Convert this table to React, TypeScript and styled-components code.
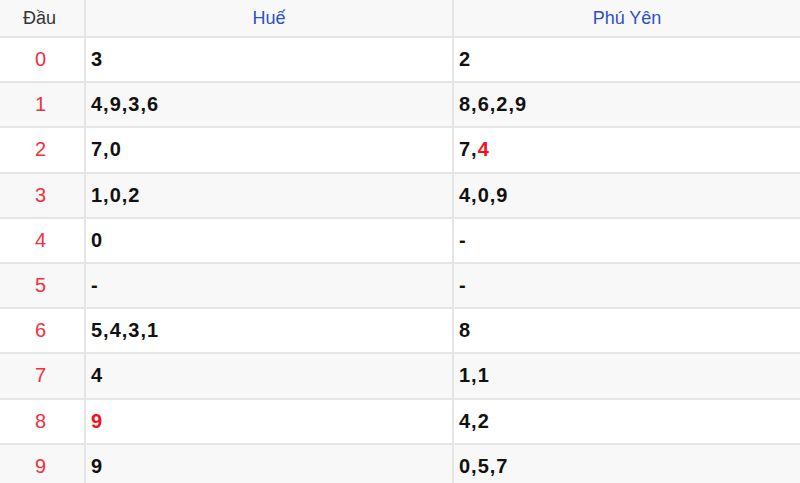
import React from "react";
import styled, { createGlobalStyle } from "styled-components";

const Global = createGlobalStyle`
    body {
        margin: 0;
        background: #fff;
        font-family: "Liberation Sans", Arial, sans-serif;
    }
`

const Table = styled.table`
    width: 800px;
    border-collapse: collapse;
    table-layout: fixed;
`

const HeadCell = styled.th<{ $blue?: boolean }>`
    height: 36px;
    padding: 0;
    background: #f8f8f8;
    border: 2px solid #e5e5e5;
    border-top: none;
    font-weight: normal;
    font-size: 18px;
    text-align: center;
    color: ${({ $blue }) => ($blue ? "#2f4fc4" : "#333")};
    &:first-child { border-left: none; padding-right: 5px; }
    &:last-child { border-right: none; }
`

const Row = styled.tr<{ $odd: boolean }>`
    background: ${({ $odd }) => ($odd ? "#f8f8f8" : "#fff")};
`

const HeadNum = styled.td`
    height: 43.2px;
    padding: 0 3px 0 0;
    border: 2px solid #e5e5e5;
    border-left: none;
    text-align: center;
    color: #f2303c;
    font-size: 20px;
`

const Cell = styled.td`
    height: 43.2px;
    padding: 0 0 0 5px;
    border: 2px solid #e5e5e5;
    font-size: 20px;
    letter-spacing: 1px;
    font-weight: bold;
    color: #111;
    &:last-child { border-right: none; }
`

const Hot = styled.span`
    color: #f2101c;
`

type Val = string | string[];

const rows: [Val, Val][] = [
    ["3", "2"],
    ["4,9,3,6", "8,6,2,9"],
    ["7,0", ["7,", "4"]],
    ["1,0,2", "4,0,9"],
    ["0", "-"],
    ["-", "-"],
    ["5,4,3,1", "8"],
    ["4", "1,1"],
    [["", "9"], "4,2"],
    ["9", "0,5,7"],
];

function Value({ v }: { v: Val }) {
    if (typeof v === "string") return <>{v}</>;
    return <>{v[0]}<Hot>{v[1]}</Hot></>;
}

export default function App() {
    return (
        <>
            <Global />
            <Table>
                <colgroup>
                    <col style={{ width: 85 }} />
                    <col style={{ width: 368 }} />
                    <col />
                </colgroup>
                <thead>
                    <tr>
                        <HeadCell>Đầu</HeadCell>
                        <HeadCell $blue>Huế</HeadCell>
                        <HeadCell $blue>Phú Yên</HeadCell>
                    </tr>
                </thead>
                <tbody>
                    {rows.map((r, i) => (
                        <Row key={i} $odd={i % 2 === 1}>
                            <HeadNum>{i}</HeadNum>
                            <Cell><Value v={r[0]} /></Cell>
                            <Cell><Value v={r[1]} /></Cell>
                        </Row>
                    ))}
                </tbody>
            </Table>
        </>
    )
}
